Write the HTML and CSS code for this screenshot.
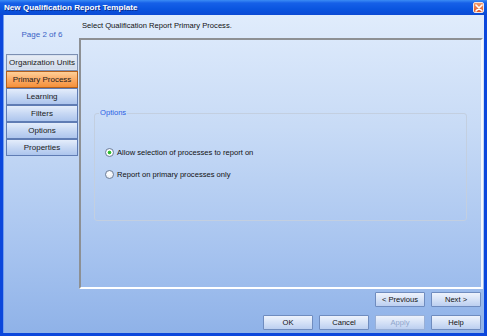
FILE: index.html
```html
<!DOCTYPE html>
<html lang="en">
<head>
    <meta charset="UTF-8">
    <title>New Qualification Report Template</title>
    <link rel="stylesheet" href="styles.css">
</head>
<body>
    <div class="window">
        <div class="titlebar">
            <span class="title">New Qualification Report Template</span>
            <span class="close-btn">
                <svg width="8" height="8" viewBox="0 0 8 8">
                    <path d="M1 1 L7 7 M7 1 L1 7" stroke="#fff" stroke-width="1.6" stroke-linecap="round"/>
                </svg>
            </span>
        </div>

        <div class="client">
            <div class="main">
                <!-- wizard steps -->
                <div class="sidebar">
                    <div class="page-label">Page 2 of 6</div>
                    <div class="steps">
                        <div class="step first">Organization Units</div>
                        <div class="step active">Primary Process</div>
                        <div class="step">Learning</div>
                        <div class="step">Filters</div>
                        <div class="step">Options</div>
                        <div class="step">Properties</div>
                    </div>
                </div>

                <div class="content">
                    <div class="heading">Select Qualification Report Primary Process.</div>
                    <div class="panel">
                        <fieldset class="group">
                            <legend>Options</legend>
                            <div class="option">
                                <span class="radio checked"></span>
                                <span>Allow selection of processes to report on</span>
                            </div>
                            <div class="option">
                                <span class="radio"></span>
                                <span>Report on primary processes only</span>
                            </div>
                        </fieldset>
                    </div>
                </div>
            </div>

            <div class="btn-row nav-row">
                <button>&lt; Previous</button>
                <button>Next &gt;</button>
            </div>
            <div class="btn-row">
                <button>OK</button>
                <button>Cancel</button>
                <button class="disabled">Apply</button>
                <button>Help</button>
            </div>
        </div>
    </div>
</body>
</html>
```

FILE: styles.css
```css
body {
    margin: 0;
    font-family: "Liberation Sans", Arial, sans-serif;
    font-size: 7.6px;
    color: #111;
}
.window {
    width: 487px;
    height: 336px;
    box-sizing: border-box;
    display: flex;
    flex-direction: column;
    background: #0b47dc;
    padding: 0 3px 3px 3px;
}
.titlebar {
    height: 15px;
    margin: 0 -3px;
    display: flex;
    align-items: center;
    justify-content: space-between;
    padding: 0 3px 0 4px;
    background: linear-gradient(to bottom, #3b8cf5 0%, #1660e8 20%, #0a55e0 60%, #0b4ad4 100%);
}
.title {
    color: #fff;
    font-family: "Liberation Sans", Arial, sans-serif;
    font-weight: bold;
    font-size: 8.1px;
    text-shadow: 1px 1px 0 #0a2e90;
}
.close-btn {
    width: 11px;
    height: 11px;
    box-sizing: border-box;
    border: 1px solid #f4e6e0;
    border-radius: 2px;
    background: linear-gradient(to bottom, #f39a6c, #e05a28);
    display: flex;
    align-items: center;
    justify-content: center;
}
.client {
    flex: 1;
    display: flex;
    flex-direction: column;
    background: linear-gradient(to bottom, #e0ecfc 0%, #c8dbf6 35%, #a6c3ef 75%, #8fb2e8 100%);
    border-left: 1px solid #6f9cf0;
}
.main {
    flex: 1;
    display: flex;
}
.sidebar {
    width: 72px;
    margin-left: 2px;
}
.page-label {
    padding-top: 14px;
    line-height: 11px;
    height: 11px;
    margin-bottom: 14px;
    text-align: center;
    color: #3a63c6;
    font-size: 8px;
}
.steps {
    display: flex;
    flex-direction: column;
}
.step {
    height: 17px;
    box-sizing: border-box;
    border: 1px solid #5f7cb4;
    background: linear-gradient(to bottom, #e4edfb, #c4d6f3 55%, #adc5ed);
    display: flex;
    align-items: center;
    justify-content: center;
    white-space: nowrap;
    font-size: 8px;
    color: #1a1a1a;
}
.step.first {
    border: 1px solid #7c8fb2;
    box-shadow: inset 0 0 0 1px #d9e2f0;
    background: linear-gradient(to bottom, #e9eef6, #cfd9ea);
}
.step.active {
    border-color: #b4601c;
    background: linear-gradient(to bottom, #ffcf98, #fba862 55%, #f5913a);
}
.content {
    flex: 1;
    display: flex;
    flex-direction: column;
    margin-left: 1px;
    margin-right: 1px;
}
.heading {
    height: 23px;
    box-sizing: border-box;
    padding: 5px 0 0 3px;
    line-height: 11px;
}
.panel {
    height: 251px;
    box-sizing: border-box;
    border-top: 2px solid #8d9094;
    border-left: 2px solid #8d9094;
    border-right: 2px solid #f4f7fc;
    border-bottom: 2px solid #ffffff;
    padding: 0 14px 0 13px;
}
.group {
    margin: 68px 0 0 0;
    padding: 0 0 0 4px;
    height: 111px;
    border: 1px solid #c3cfe0;
    border-radius: 3px;
}
.group legend {
    padding: 0 1px;
    color: #2c5ee4;
    font-size: 7.6px;
    line-height: 10px;
}
.option {
    display: flex;
    align-items: center;
    gap: 3px;
    margin-left: 6px;
    height: 12px;
}
.option:first-of-type {
    margin-top: 28px;
}
.option + .option {
    margin-top: 10px;
}
.radio {
    width: 9px;
    height: 9px;
    box-sizing: border-box;
    border-radius: 50%;
    border: 1px solid #6f7f99;
    background: radial-gradient(circle at 40% 35%, #ffffff, #e4e8ef);
}
.radio.checked {
    background: radial-gradient(circle, #28b428 0, #3cc43c 1.6px, #ffffff 2.2px, #e8ecf2);
}
.btn-row {
    display: flex;
    justify-content: flex-end;
    gap: 6px;
    padding-right: 3px;
}
.nav-row {
    margin-top: 3px;
    margin-bottom: 8px;
}
.btn-row:last-child {
    margin-bottom: 3px;
}
button {
    width: 50px;
    height: 15px;
    padding: 0;
    font-family: "Liberation Sans", Arial, sans-serif;
    font-size: 7.6px;
    color: #111;
    border: 1px solid #6f8cbf;
    border-radius: 1px;
    background: linear-gradient(to bottom, #eef3fc, #d3e0f6 55%, #bccff0);
}
button.disabled {
    color: #90a6cc;
    border-color: #98afd6;
}
```
